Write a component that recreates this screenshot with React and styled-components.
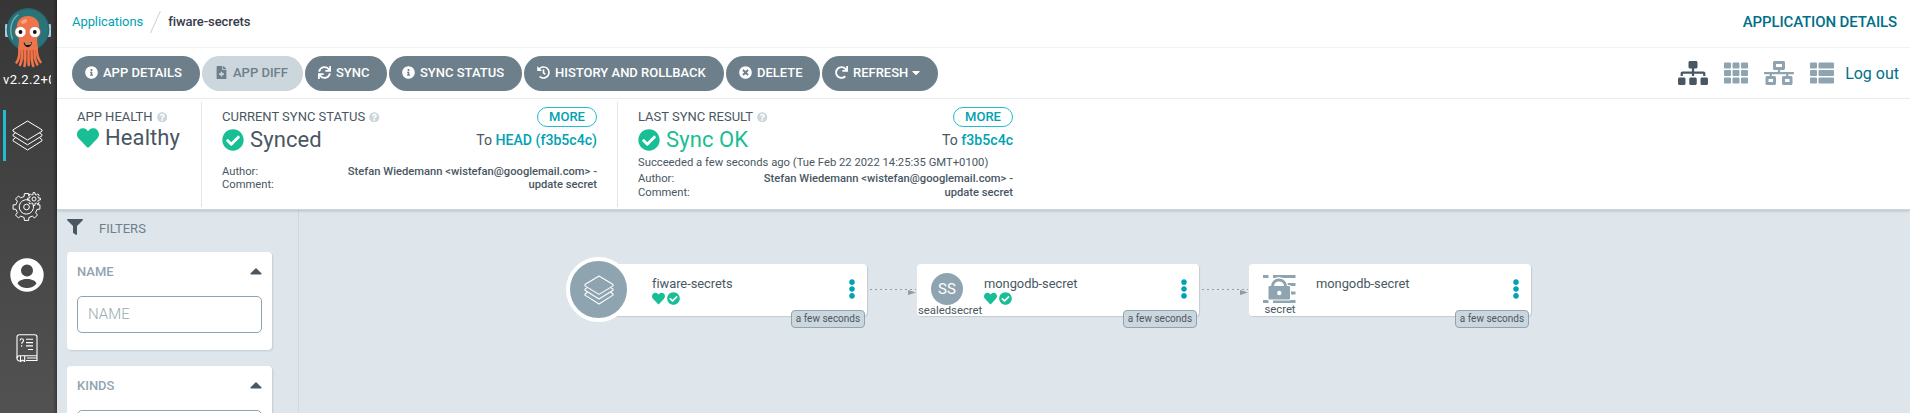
import React from 'react';
import styled, { createGlobalStyle } from 'styled-components';
import {
  FaInfoCircle, FaFileMedical, FaSync, FaHistory, FaTimesCircle, FaRedo, FaCaretDown, FaCaretUp,
  FaSitemap, FaTh, FaNetworkWired, FaThList, FaHeart, FaCheckCircle, FaQuestionCircle, FaFilter, FaEllipsisV,
} from 'react-icons/fa';

const GlobalStyle = createGlobalStyle`
  *, *::before, *::after { box-sizing: border-box; }
  body {
    margin: 0;
    overflow: hidden;
    font-family: Roboto, "Liberation Sans", sans-serif;
    font-size: 13px;
    color: #495763;
    background: #dee6ec;
  }
  svg { display: block; flex: none; }
`;

const Page = styled.div`
  display: flex;
  height: 413px;
  overflow: hidden;
`;

const Sidebar = styled.nav`
  flex: none;
  width: 57px;
  display: flex;
  flex-direction: column;
  background: linear-gradient(to right, transparent 53px, rgba(0, 0, 0, 0.3) 57px),
    linear-gradient(#363636, #525252);
`;

const LogoBox = styled.div`
  padding: 7px 0 0 4px;
  height: 70px;
`;

const Version = styled.div`
  margin-left: 3px;
  width: 48px;
  height: 20px;
  line-height: 20px;
  overflow: hidden;
  white-space: nowrap;
  color: #fff;
  font-size: 13px;
  letter-spacing: 0.4px;
`;

const NavItem = styled.a`
  display: flex;
  align-items: center;
  justify-content: center;
  width: 45px;
  height: 51px;
  margin: ${p => p.$top}px 0 0 3px;
  border-left: 3px solid ${p => (p.$active ? '#1fbdd0' : 'transparent')};
  color: #fff;
`;

const Content = styled.div`
  flex: 1;
  min-width: 0;
  display: flex;
  flex-direction: column;
`;

const TopBar = styled.header`
  display: flex;
  align-items: center;
  justify-content: space-between;
  height: 48px;
  padding: 0 13px 4px 15px;
  background: #fff;
  border-bottom: 1px solid #eff3f5;
`;

const Breadcrumb = styled.div`
  display: flex;
  align-items: center;
  height: 22px;
  padding-top: 1px;
`;

const Crumb = styled.span`
  color: ${p => (p.$current ? '#363c4a' : '#00a2b3')};
  font-weight: ${p => (p.$current ? 500 : 400)};
  letter-spacing: -0.07px;
  line-height: 20px;
`;

const Slash = styled.i`
  width: 1px;
  height: 24px;
  margin: 0 12px;
  background: #ccd6dd;
  transform: rotate(24deg);
`;

const PageTitle = styled.div`
  color: #006f8a;
  font-size: 15px;
  font-weight: 500;
  letter-spacing: -0.12px;
  text-transform: uppercase;
`;

const Toolbar = styled.div`
  display: flex;
  align-items: center;
  height: 51px;
  padding: 0 11px 0 15px;
  background: #fff;
  border-bottom: 1px solid #eff3f5;
`;

const Actions = styled.div`
  display: flex;
  gap: 2px;
  flex: 1;
`;

const ActionButton = styled.button`
  display: flex;
  align-items: center;
  height: 35px;
  width: ${p => p.$w}px;
  padding: 0 0 1px 13px;
  border: 0;
  border-radius: 18px;
  background: ${p => (p.disabled ? '#ccd6dd' : '#6d7f8b')};
  color: ${p => (p.disabled ? '#6d7f8b' : '#fff')};
  font: 500 13px Roboto, sans-serif;
  text-transform: uppercase;
  white-space: nowrap;
  & > svg:first-child { margin-right: 5px; }
  & > svg:last-child { width: 8px; margin-left: 4px; }
`;

const Views = styled.div`
  display: flex;
  align-items: center;
  gap: 16px;
  color: #8fa4b1;
`;

const ViewIcon = styled.a`
  color: ${p => (p.$selected ? '#495763' : '#8fa4b1')};
`;

const Logout = styled.a`
  margin-left: 11px;
  color: #006f8a;
  font-size: 16px;
`;

const StatusPanel = styled.section`
  position: relative;
  z-index: 1;
  flex: none;
  display: flex;
  height: 111px;
  padding-top: 3px;
  background: #fff;
  border-bottom: 1px solid #ccd6dd;
  box-shadow: 0 1px 3px rgba(0, 0, 0, 0.18);
`;

const StatusItem = styled.div`
  width: ${p => p.$w}px;
  height: 105px;
  padding: 5px 20px 0;
  border-right: ${p => (p.$last ? 0 : '1px solid #dee6ec')};
`;

const Row = styled.div`
  display: flex;
  align-items: center;
  justify-content: space-between;
  height: ${p => p.$h}px;
`;

const Label = styled.div`
  display: flex;
  align-items: center;
  gap: 4px;
  padding-bottom: 1px;
  text-transform: uppercase;
  white-space: nowrap;
  svg { color: #ccd6dd; margin-top: 1px; }
`;

const MoreButton = styled.button`
  width: 60px;
  height: 20px;
  padding: 0 0 1px;
  border: 1px solid #1fbdd0;
  border-radius: 10px;
  background: #fff;
  color: #00a2b3;
  font: 500 13px Roboto, sans-serif;
`;

const StatusValue = styled.div`
  display: flex;
  align-items: center;
  gap: 6px;
  font-size: 22px;
  line-height: 24px;
  letter-spacing: 0.1px;
  color: ${p => (p.$ok ? '#18be94' : '#495763')};
  svg { color: #18be94; }
`;

const Revision = styled.div`
  font-size: 14.1px;
  white-space: nowrap;
  b { color: #00a2b3; font-weight: 500; }
`;

const Details = styled.dl`
  display: grid;
  grid-template-columns: auto 1fr;
  margin: ${p => p.$top}px 0 0;
  font-size: 11.2px;
  line-height: ${p => p.$line}px;
  dt { grid-column: 1; }
  dd { margin: 0; text-align: right; font-weight: 500; white-space: nowrap; }
`;

const Message = styled.div`
  margin-top: 2px;
  font-size: 11.25px;
  line-height: 17px;
  white-space: nowrap;
`;

const Main = styled.main`
  flex: 1;
  display: flex;
  min-height: 0;
`;

const Filters = styled.aside`
  flex: none;
  width: 242px;
  padding: 8px 26px 0 10px;
  border-right: 1px solid #cfd9df;
`;

const FiltersTitle = styled.div`
  display: flex;
  align-items: center;
  gap: 16px;
  height: 18px;
  margin-bottom: 16px;
  color: #6d7f8b;
  svg { color: #495763; }
  span { padding-top: 3px; }
`;

const FilterCard = styled.div`
  height: 98px;
  margin-bottom: 16px;
  padding: 10px;
  background: #fff;
  border-radius: 4px;
  box-shadow: 1px 1px 2px rgba(0, 0, 0, 0.12);
`;

const FilterHead = styled.div`
  display: flex;
  justify-content: space-between;
  align-items: center;
  height: 18px;
  color: #8fa4b1;
  font-weight: 500;
  svg { width: 12px; color: #495763; }
`;

const FilterInput = styled.input`
  display: block;
  width: 185px;
  height: 37px;
  margin-top: 16px;
  padding: 0 10px 2px;
  border: 1px solid #8fa4b1;
  border-radius: 5px;
  outline: 0;
  background: #fff;
  font: 300 15px Roboto, sans-serif;
  &::placeholder { color: #9aa9b3; opacity: 1; }
`;

const Canvas = styled.div`
  position: relative;
  flex: 1;
`;

const NodeCard = styled.div`
  position: absolute;
  left: ${p => p.$x}px;
  top: 54px;
  width: 282px;
  height: 52px;
  display: flex;
  background: #fff;
  border-radius: 4px;
  box-shadow: 1px 1px 1px rgba(0, 0, 0, 0.12);
`;

const NodeKind = styled.div`
  flex: none;
  width: 60px;
  height: 52px;
  display: flex;
  flex-direction: column;
  align-items: center;
  padding-top: 9px;
  font-size: 11.3px;
  line-height: 12px;
  svg { margin-top: 1px; }
`;

const KindName = styled.span`
  align-self: flex-start;
  min-width: 61px;
  padding-left: 1px;
  text-align: center;
`;

const RootBadge = styled.div`
  position: absolute;
  left: -19px;
  top: -7px;
  width: 65px;
  height: 65px;
  display: flex;
  align-items: center;
  justify-content: center;
  border: 4px solid #fff;
  border-radius: 50%;
  background: #8fa4b1;
  color: #fff;
`;

const Initials = styled.div`
  width: 32px;
  height: 32px;
  border-radius: 50%;
  background: #8fa4b1;
  color: #fff;
  font-size: 15px;
  line-height: 32px;
  text-align: center;
`;

const NodeBody = styled.div`
  flex: 1;
  padding: 11px 0 0 7px;
  font-size: 12.9px;
  letter-spacing: -0.04px;
  line-height: 17px;
`;

const NodeBadges = styled.div`
  display: flex;
  gap: 2px;
  color: #18be94;
`;

const NodeMenu = styled.div`
  width: 25px;
  padding-top: 15px;
  color: #00a2b3;
`;

const Age = styled.div`
  position: absolute;
  right: 2px;
  bottom: -12px;
  width: 74px;
  height: 18px;
  border: 1px solid #8fa4b1;
  border-radius: 4px;
  background: #ccd6dd;
  font-size: 10px;
  line-height: 16px;
  text-align: center;
`;

const Edge = styled.svg`
  position: absolute;
  left: ${p => p.$x}px;
  top: 74px;
`;

const Logo = () => (
  <svg width="48" height="62" viewBox="0 0 48 62">
    <rect x="1" y="17" width="3.600" height="13" rx="1.200" fill="#a9c9dc" />
    <rect x="43.400" y="17" width="3.600" height="13" rx="1.200" fill="#a9c9dc" />
    <circle cx="24" cy="22.500" r="21.200" fill="#2a7479" />
    <circle cx="24" cy="22.500" r="20.600" fill="none" stroke="#25676d" strokeWidth="1.200" />
    <path d="M8.500 32C5 23 7 13 14 8" fill="none" stroke="#6fb5b5" strokeWidth="1.300" strokeLinecap="round" />
    <path d="M12.800 20C12.800 13 17.500 9 24 9s11.200 4 11.200 11c0 7-2 10-2 14l.8 9H14l1-9C15 29 12.800 27 12.800 20z" fill="#f0744a" />
    <g fill="none" stroke="#f0744a" strokeWidth="2.600" strokeLinecap="round">
      <path d="M15.500 41c0 5 .5 10-3 14.500" />
      <path d="M18 41c0 6 .5 13-2 17" />
      <path d="M21.300 41c-.3 7 .5 13-.8 18" />
      <path d="M24.500 41c.3 7-.3 11 .3 17" />
      <path d="M27.500 41c0 6-.2 13 1.800 18" />
      <path d="M30.300 41c0 6 .2 12 3 16.500" />
      <path d="M32.500 41c.3 5 .5 10 4 14" />
    </g>
    <path d="M19.500 43v10M23 44v10M26.300 44v10M29.500 43v9" stroke="#cf5733" strokeWidth=".8" fill="none" />
    <ellipse cx="20" cy="14.500" rx="3.200" ry="2" fill="#f8a184" transform="rotate(-25 20 14.500)" />
    <circle cx="16.500" cy="25" r="5.600" fill="#fff" stroke="#d8583a" strokeWidth=".6" />
    <circle cx="30.800" cy="25" r="5.600" fill="#fff" stroke="#d8583a" strokeWidth=".6" />
    <circle cx="16.500" cy="25" r="1.900" fill="#111" />
    <circle cx="30.800" cy="25" r="1.900" fill="#111" />
    <path d="M19.500 35.500c3 1.200 6 1 8.500-.5-.3 3-2 5.200-4.200 5.200s-3.800-2-4.300-4.700z" fill="#241313" />
    <path d="M21 36.300c2 .5 4 .3 6-.4l-.5 1.300c-1.700.5-3.300.5-5 .2z" fill="#fff" />
  </svg>
);

const Layers = ({ size, stroke = 1 }) => (
  <svg width={size} height={size} viewBox="0 0 31 31" fill="none" stroke="currentColor" strokeWidth={stroke} strokeLinejoin="round">
    <path d="M15.500 1 30 9.800v1.400L15.500 20 1 11.200V9.800z" />
    <path d="M3.500 13 1 14.600v1.200l14.500 9 14.500-9v-1.200L27.500 13" />
    <path d="M3.500 17.800 1 19.600v1.200l14.500 9.200L30 20.800v-1.200l-2.500-1.800" />
  </svg>
);

function gearPath(cx, cy, inner, outer, teeth, from = 0, to = teeth) {
  const step = (Math.PI * 2) / teeth;
  const pt = (r, a) => `${(cx + r * Math.cos(a)).toFixed(2)} ${(cy + r * Math.sin(a)).toFixed(2)}`;
  const points = [];
  for (let i = from; i < to; i += 1) {
    const a = i * step;
    points.push(pt(inner, a - step * 0.28), pt(outer, a - step * 0.2), pt(outer, a + step * 0.2), pt(inner, a + step * 0.28));
  }
  return `M${points.join('L')}${to - from === teeth ? 'Z' : ''}`;
}

const Gears = () => (
  <svg width="30" height="30" viewBox="0 0 30 30" fill="none" stroke="currentColor" strokeWidth="1" strokeLinejoin="round">
    <path d={gearPath(14.5, 16, 10.8, 13.6, 8, 0, 7)} />
    <path d="M17 9.200A7.200 7.200 0 1 0 21.300 14" />
    <circle cx="14.500" cy="16" r="2.800" />
    <path d={gearPath(22, 8, 4.6, 6.4, 8)} />
    <circle cx="22" cy="8" r="2" />
  </svg>
);

const Account = () => (
  <svg width="34" height="34" viewBox="0 0 34 34">
    <path
      fill="currentColor"
      fillRule="evenodd"
      d="M17 .3a16.700 16.700 0 1 0 0 33.400A16.700 16.700 0 0 0 17 .3zM17 6.500a6 6 0 1 1 0 12 6 6 0 0 1 0-12zM17 21c4.500 0 8.500 1.600 9.500 4.500-2.200 3-5.600 4.500-9.500 4.500s-7.300-1.500-9.500-4.500C8.500 22.600 12.500 21 17 21z"
    />
  </svg>
);

const Docs = () => (
  <svg width="22" height="28" viewBox="0 0 22 28" fill="none" stroke="currentColor" strokeWidth="1.100">
    <path d="M4 27H3.500A2.500 2.500 0 0 1 1 24.300V3A2.200 2.200 0 0 1 3.200.8h15.600A2.200 2.200 0 0 1 21 3v23.500H10" />
    <path d="M1 24.300C1 22.500 2.200 21.700 3.500 21.700H21M11 24h10" />
    <path d="M4.500 22v5.500l2-1.300 2.200 1.300V22" />
    <path d="M4 6.500c0-2.400 3.500-2.400 3.500 0 0 1.500-1.800 1.500-1.800 3.200M5.700 11.300v1.500M10 5.300h7M10 8.600h7M10 11.900h7M12 15.500h5" />
  </svg>
);

const SecretIcon = () => (
  <svg width="34" height="30" viewBox="0 0 34 30">
    <path fill="#8fa4b1" d="M1 1h5.500v3H1zM11 1h22.500v3H11zM21 9h12.500v3H21zM27 17.500h6.500v3H27zM1 26h5.500v3H1zM11 26h22.500v3H11z" />
    <path d="M11 13v-1a6 6 0 0 1 12 0v1" fill="none" stroke="#fff" strokeWidth="6" />
    <rect x="5.500" y="11" width="23.500" height="15.500" rx="1.500" fill="#fff" />
    <path d="M10.500 13v-1a6.500 6 0 0 1 13 0v1" fill="none" stroke="#8fa4b1" strokeWidth="3" />
    <rect x="6.500" y="12" width="21.500" height="13.500" rx="1" fill="#8fa4b1" />
    <circle cx="17.300" cy="19" r="2.200" fill="#fff" />
  </svg>
);

const EdgeLine = ({ x, length }) => (
  <Edge $x={x} width={length} height="12">
    <path d={`M0 5.500H${length}`} stroke="#919fa9" strokeDasharray="2 3" />
    <path d={`M${length - 8} 6v5l8-2.500z`} fill="#999" />
  </Edge>
);

const actions = [
  { label: 'App Details', icon: FaInfoCircle, width: 128 },
  { label: 'App Diff', icon: FaFileMedical, width: 101, disabled: true },
  { label: 'Sync', icon: FaSync, width: 82 },
  { label: 'Sync Status', icon: FaInfoCircle, width: 133 },
  { label: 'History and rollback', icon: FaHistory, width: 200 },
  { label: 'Delete', icon: FaTimesCircle, width: 94 },
  { label: 'Refresh', icon: FaRedo, width: 116, menu: true },
];

const Commit = ({ top, line }) => (
  <Details $top={top} $line={line}>
    <dt>Author:</dt>
    <dd>Stefan Wiedemann &lt;wistefan@googlemail.com&gt; -</dd>
    <dt>Comment:</dt>
    <dd>update secret</dd>
  </Details>
);

const Heading = ({ children }) => (
  <Label>{children}<FaQuestionCircle size={10.500} /></Label>
);

const Filter = ({ title }) => (
  <FilterCard>
    <FilterHead>{title}<FaCaretUp size={20} /></FilterHead>
    <FilterInput placeholder={title} />
  </FilterCard>
);

const Node = ({ x, name, kind, healthy, root }) => (
  <NodeCard $x={x}>
    {root && <RootBadge><Layers size={30} stroke={1.1} /></RootBadge>}
    <NodeKind>{kind}</NodeKind>
    <NodeBody>
      {name}
      {healthy && <NodeBadges><FaHeart size={13} /><FaCheckCircle size={13} /></NodeBadges>}
    </NodeBody>
    <NodeMenu><FaEllipsisV size={20} /></NodeMenu>
    <Age>a few seconds</Age>
  </NodeCard>
);

export default function App() {
  return (
    <Page>
      <GlobalStyle />
      <Sidebar>
        <LogoBox><Logo /></LogoBox>
        <Version>v2.2.2+03b5c4c</Version>
        <NavItem $top={20} $active><Layers size={31} /></NavItem>
        <NavItem $top={19}><Gears /></NavItem>
        <NavItem $top={18}><Account /></NavItem>
        <NavItem $top={22}><Docs /></NavItem>
      </Sidebar>
      <Content>
        <TopBar>
          <Breadcrumb>
            <Crumb>Applications</Crumb>
            <Slash />
            <Crumb $current>fiware-secrets</Crumb>
          </Breadcrumb>
          <PageTitle>Application Details</PageTitle>
        </TopBar>
        <Toolbar>
          <Actions>
            {actions.map(({ label, icon: Icon, width, disabled, menu }) => (
              <ActionButton key={label} $w={width} disabled={disabled}>
                <Icon size={13} />
                <span>{label}</span>
                {menu && <FaCaretDown size={13} />}
              </ActionButton>
            ))}
          </Actions>
          <Views>
            <ViewIcon $selected><FaSitemap size={24} style={{ width: 30 }} /></ViewIcon>
            <ViewIcon><FaTh size={24} /></ViewIcon>
            <ViewIcon><FaNetworkWired size={24} style={{ width: 30 }} /></ViewIcon>
            <ViewIcon><FaThList size={24} /></ViewIcon>
          </Views>
          <Logout>Log out</Logout>
        </Toolbar>
        <StatusPanel>
          <StatusItem $w={145}>
            <Row $h={20}><Heading>App Health</Heading></Row>
            <Row $h={22}><StatusValue><FaHeart size={22} />Healthy</StatusValue></Row>
          </StatusItem>
          <StatusItem $w={416}>
            <Row $h={20}><Heading>Current Sync Status</Heading><MoreButton>MORE</MoreButton></Row>
            <Row $h={25}>
              <StatusValue><FaCheckCircle size={22} />Synced</StatusValue>
              <Revision>To <b>HEAD (f3b5c4c)</b></Revision>
            </Row>
            <Commit top={13} line={13} />
          </StatusItem>
          <StatusItem $w={415} $last>
            <Row $h={20}><Heading>Last Sync Result</Heading><MoreButton>MORE</MoreButton></Row>
            <Row $h={25}>
              <StatusValue $ok><FaCheckCircle size={22} />Sync OK</StatusValue>
              <Revision>To <b>f3b5c4c</b></Revision>
            </Row>
            <Message>Succeeded a few seconds ago (Tue Feb 22 2022 14:25:35 GMT+0100)</Message>
            <Commit top={1} line={14} />
          </StatusItem>
        </StatusPanel>
        <Main>
          <Filters>
            <FiltersTitle><FaFilter size={16} /><span>FILTERS</span></FiltersTitle>
            <Filter title="NAME" />
            <Filter title="KINDS" />
          </Filters>
          <Canvas>
            <EdgeLine x={571} length={46} />
            <EdgeLine x={903} length={46} />
            <Node x={286} name="fiware-secrets" healthy root />
            <Node x={618} name="mongodb-secret" healthy kind={<><Initials>SS</Initials><KindName>sealedsecret</KindName></>} />
            <Node x={950} name="mongodb-secret" kind={<><SecretIcon /><KindName>secret</KindName></>} />
          </Canvas>
        </Main>
      </Content>
    </Page>
  );
}
